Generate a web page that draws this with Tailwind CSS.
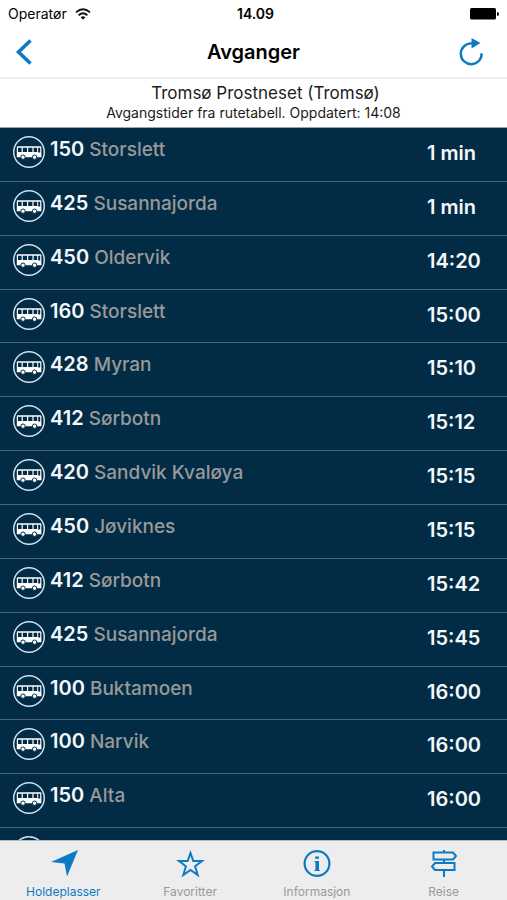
<!DOCTYPE html>
<html lang="no">
<head>
<meta charset="utf-8">
<meta name="viewport" content="width=device-width, initial-scale=1">
<title>Avganger</title>
<script src="https://cdn.jsdelivr.net/npm/@tailwindcss/browser@4"></script>
</head>
<body class="flex h-screen flex-col overflow-hidden bg-white font-['Inter','Liberation_Sans',sans-serif] text-black">
<svg class="hidden" aria-hidden="true">
  <symbol id="bus" viewBox="0 0 34 34">
    <circle cx="17" cy="17" r="15.3" fill="none" stroke="#cfe0ec" stroke-width="1.5"/>
    <path fill="#fff" fill-rule="evenodd" d="M5.8 11.3H28.4Q29.4 11.3 29.4 12.4V22.2H4.8V12.4Q4.8 11.3 5.8 11.3ZM6 12.7V16.9H9.6V12.7ZM10.8 12.7V16.9H15V12.7ZM16.2 12.7V16.9H20.4V12.7ZM21.6 12.7V16.9H25.2V12.7ZM26.2 12.7V17.4H28.2V12.7Z"/>
    <circle cx="11" cy="22.2" r="2.2" fill="#fff" stroke="#022c45"/>
    <circle cx="22.6" cy="22.2" r="2.2" fill="#fff" stroke="#022c45"/>
  </symbol>
</svg>
<header class="shrink-0 border-b-2 border-[#efefef]">
  <div class="grid h-7 grid-cols-3 items-center px-2 text-sm">
    <div class="flex items-center gap-2">
      <span>Operatør</span>
      <svg class="h-3 w-4" viewBox="0 0 16 12" fill="none" stroke="#111" stroke-width="1.8" aria-label="Wi-Fi"><path d="M1 4.4Q8-1.8 15 4.4M3.6 7.2Q8 3.4 12.4 7.2"/><path d="M5.6 9.2Q8 7.2 10.4 9.2L8 11.7Z" fill="#111" stroke="none"/></svg>
    </div>
    <span class="pl-1 text-center font-semibold">14.09</span>
    <svg class="h-3 w-8 justify-self-end" viewBox="0 0 32 12" aria-label="Batteri"><rect x="3" y="0" width="26" height="11.5" rx="1.5"/><path d="M30 4Q32 4 32 6T30 8Z"/></svg>
  </div>
  <div class="grid h-[49px] grid-cols-[1fr_auto_1fr] items-center px-3 pb-0.5">
    <button type="button" aria-label="Tilbake" class="justify-self-start"><svg class="h-8 w-6" viewBox="0 0 24 32" fill="none" stroke="#0d7bc4" stroke-width="3.6"><path d="M18.5 4.5L6.5 16L18.5 27.5"/></svg></button>
    <h1 class="text-xl font-semibold">Avganger</h1>
    <button type="button" aria-label="Oppdater" class="mr-2 justify-self-end"><svg class="h-8 w-8" viewBox="0 0 32 32" fill="none" stroke="#0d7bc4" stroke-width="2.4"><path d="M18 7.4H16A10.4 10.4 0 1 0 26.6 17.2"/><path d="M16.5 2L25.5 7L16.5 12.4Z" fill="#0d7bc4" stroke="none"/></svg></button>
  </div>
</header>
<section class="shrink-0 border-b border-[#9aa5ad] pt-1 pb-1 text-center text-[#1c1c1c]">
  <h2 class="pl-6 text-[17px] leading-5">Tromsø Prostneset (Tromsø)</h2>
  <p class="text-sm leading-5">Avgangstider fra rutetabell. Oppdatert: 14:08</p>
</section>
<main class="min-h-0 flex-1 overflow-hidden bg-[#022c45]">
  <ul id="departures" class="grid h-[754px] grid-rows-[repeat(14,minmax(0,1fr))]"></ul>
</main>
<nav class="grid h-[60px] shrink-0 grid-cols-4 border-t border-[#b4bcc2] bg-[#ededed] text-xs text-[#999]">
  <a href="#" class="flex flex-col items-center gap-1 pt-[7px] text-[#0d7bc4]"><svg class="h-8 w-8" viewBox="0 0 32 32" fill="#0d7bc4"><path d="M31 2L20 28.5L17.5 15.5L4 14Z"/></svg>Holdeplasser</a>
  <a href="#" class="flex flex-col items-center gap-1 pt-[7px]"><svg class="h-8 w-8" viewBox="0 0 32 32" fill="none" stroke="#0d7bc4" stroke-width="2"><path d="M16.5 5L19.3 13H28L21.1 18.3L23.7 27L16.5 22L9.3 27L11.9 18.3L5 13H13.7Z"/></svg>Favoritter</a>
  <a href="#" class="flex flex-col items-center gap-1 pt-[7px]"><svg class="h-8 w-8" viewBox="0 0 32 32" fill="none" stroke="#0d7bc4" stroke-width="2.2"><circle cx="16" cy="15.5" r="12.4"/><path d="M14.2 8.4H18V10.8H14.2ZM13.5 13H18V22H18.8V23H13.5V22H14.4V14H13.5Z" fill="#0d7bc4" stroke="none"/></svg>Informasjon</a>
  <a href="#" class="flex flex-col items-center gap-1 pt-[7px]"><svg class="h-8 w-8" viewBox="0 0 32 32" fill="none" stroke="#0d7bc4" stroke-width="2"><path d="M16 2V4.5M16 11.5V15M16 22V29M5.5 4.5H25L28 8L25 11.5H5.5ZM26.5 15H7L4 18.5L7 22H26.5Z"/></svg>Reise</a>
</nav>
<script>
const departures = [
  ["150","Storslett","1 min"],["425","Susannajorda","1 min"],["450","Oldervik","14:20"],["160","Storslett","15:00"],
  ["428","Myran","15:10"],["412","Sørbotn","15:12"],["420","Sandvik Kvaløya","15:15"],["450","Jøviknes","15:15"],
  ["412","Sørbotn","15:42"],["425","Susannajorda","15:45"],["100","Buktamoen","16:00"],["100","Narvik","16:00"],["150","Alta","16:00"],["","",""]
];
document.getElementById("departures").innerHTML = departures.map(([line, name, time]) => `
<li class="flex items-start border-b border-[#4a6577] pl-3 text-xl font-semibold text-[#f4f8fb]">
  <svg class="mt-[7px] h-[34px] w-[34px] shrink-0" aria-hidden="true"><use href="#bus"/></svg>
  <p class="flex-1 pt-[7px] pl-1 text-[19px] leading-7 font-medium text-[#999]"><span class="text-xl leading-7 font-semibold text-[#f4f8fb]">${line}</span> ${name}</p>
  <time class="w-20 pt-[11px] leading-7">${time}</time>
</li>`).join("");
</script>
</body>
</html>
